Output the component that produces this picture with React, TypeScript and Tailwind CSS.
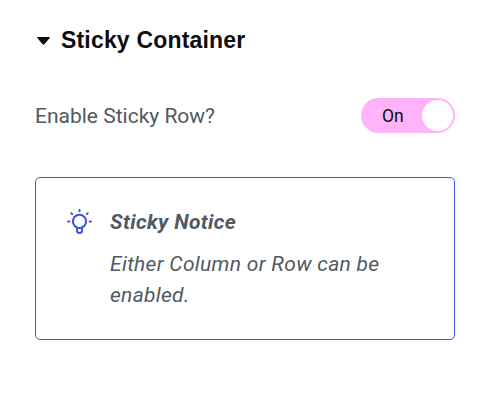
function BulbIcon() {
  return (
    <svg className="h-[27px] w-[27px] shrink-0" viewBox="0 0 27 27" fill="none" stroke="#3f52e3" strokeWidth="2" strokeLinecap="round" strokeLinejoin="round">
      <path d="M13.5 2v1.2M5.3 5.2l.8.8M21.7 5.2l-.8.8M2 13.5h1.3M23.7 13.5h1.3" />
      <path d="M11.1 19.5a6.6 6.6 0 1 1 4.8 0" />
      <path d="M11 19.9h5v2.7a2.5 2.5 0 0 1-5 0z" />
    </svg>
  );
}

export default function App() {
  return (
    <div className="h-[408px] w-[488px] bg-white pt-[24px] pr-[33px] pl-[35px] font-['Roboto',sans-serif] text-[#515962]">
      {/* Section heading */}
      <div className="flex h-8 items-center">
        <svg className="mt-[2px] ml-[2px] h-[8px] w-[13px]" viewBox="0 0 14 8" preserveAspectRatio="none" fill="#0c0d0e">
          <path d="M1 0h12q1.3.3.5 1.3L7.9 7.3q-.9.9-1.8 0L.5 1.3Q-.3.3 1 0Z" />
        </svg>
        <h2 className="ml-[11px] font-['Liberation_Sans',sans-serif] text-[23px] font-bold tracking-[0.18px] text-[#0c0d0e]">Sticky Container</h2>
      </div>

      {/* Toggle row */}
      <div className="mt-[42px] flex h-[35px] items-center justify-between">
        <span className="mt-[2px] text-[21px]">Enable Sticky Row?</span>
        <button className="flex h-[35px] w-[94px] items-center justify-between rounded-full bg-[#ffb3fb] pr-[2px] pl-[21px] text-[17.5px] text-[#0c0d0e]">
          <span className="mt-[2px]">On</span>
          <span className="h-[31px] w-[31px] rounded-full bg-white" />
        </button>
      </div>

      {/* Notice */}
      <div className="mt-[44px] flex h-[163px] rounded-[5px] border border-[#3f52e3] pt-[30px] pl-[30px] italic">
        <BulbIcon />
        <div className="ml-[17px]">
          <h3 className="text-[21px] leading-[28px] font-bold tracking-[0.36px]">Sticky Notice</h3>
          <p className="mt-[13px] w-[300px] text-[21px] leading-[31px] tracking-[0.3px]">Either Column or Row can be enabled.</p>
        </div>
      </div>
    </div>
  );
}
